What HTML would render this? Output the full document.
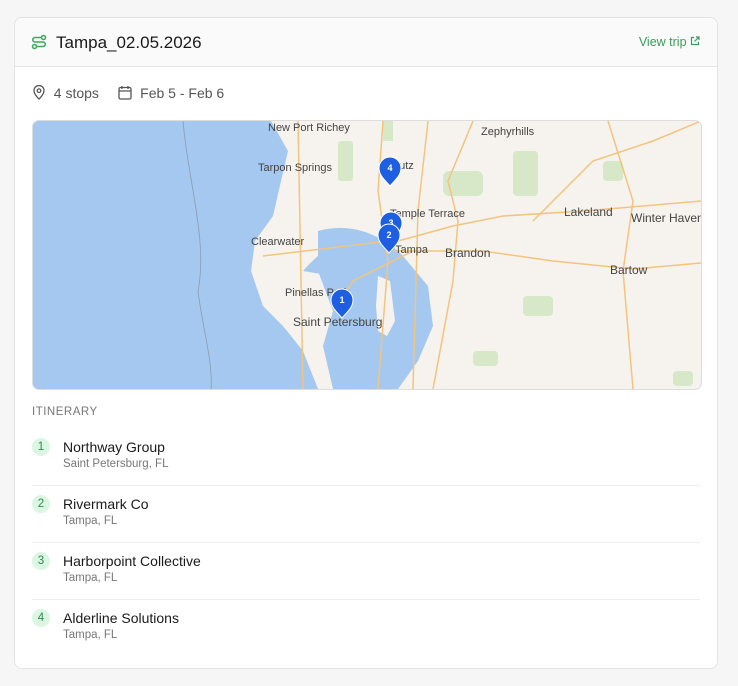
<!DOCTYPE html>
<html><head><style>
body{margin:0;background:#f6f6f6;font-family:"Liberation Sans",sans-serif;}
.card{position:absolute;left:14px;top:17px;width:702px;height:650px;background:#fff;border:1px solid #e3e3e3;border-radius:8px;overflow:hidden;}
.hdr{height:48px;background:#fafafa;border-bottom:1px solid #e6e6e6;position:relative;}
.title{position:absolute;left:41px;top:15px;font-size:17px;color:#1a1a1a;}
.vt{position:absolute;right:17px;top:17px;font-size:12.5px;color:#3f9a5a;}
.meta{position:absolute;top:67px;left:17px;font-size:14px;color:#555;}
.map{position:absolute;left:17px;top:102px;width:668px;height:268px;border:1px solid #ddd;border-radius:7px;overflow:hidden;background:#a4c8ef;}
.it{position:absolute;left:17px;top:388px;font-size:11.5px;color:#777;letter-spacing:.5px;}
.row{position:absolute;left:17px;width:668px;height:57px;border-bottom:1px solid #eee;}
.num{position:absolute;left:0;top:10px;width:18px;height:18px;border-radius:9px;background:#dcf6e4;color:#2f8a4d;font-size:11.5px;text-align:center;line-height:18px;}
.nm{position:absolute;left:31px;top:11px;font-size:14px;color:#1a1a1a;}
.loc{position:absolute;left:31px;top:30px;font-size:11.5px;color:#777;}
.mt{font-family:"Liberation Sans",sans-serif;font-size:11px;fill:#444;}
</style></head><body>
<div class="card">
 <div class="hdr">
  <svg style="position:absolute;left:16px;top:16px" width="16" height="16" viewBox="0 0 16 16" fill="none" stroke="#3fa85a" stroke-width="1.5"><circle cx="3.5" cy="12.5" r="2"/><circle cx="12.5" cy="3.5" r="2"/><path d="M10.5 3.5H4a2.2 2.2 0 0 0 0 4.5h8a2.2 2.2 0 0 1 0 4.5H5.5"/></svg>
  <div class="title">Tampa_02.05.2026</div>
  <div class="vt">View trip <svg width="10" height="10" viewBox="0 0 10 10" fill="none" stroke="#3f9a5a" stroke-width="1.2"><path d="M4 1.5H1.5v7h7V6M6 1h3v3M9 1L4.5 5.5"/></svg></div>
 </div>
 <div class="meta">
  <svg style="vertical-align:-2px" width="14" height="15" viewBox="0 0 14 15" fill="none" stroke="#555" stroke-width="1.3"><path d="M7 14s5-4.5 5-8.5a5 5 0 0 0-10 0C2 9.5 7 14 7 14z"/><circle cx="7" cy="5.7" r="1.8"/></svg>
  &nbsp;4 stops &nbsp;&nbsp;&nbsp;
  <svg style="vertical-align:-2px" width="14" height="15" viewBox="0 0 14 15" fill="none" stroke="#555" stroke-width="1.3"><rect x="1" y="2.5" width="12" height="11.5" rx="1.5"/><path d="M1 6h12M4 1v3M10 1v3"/></svg>
  &nbsp;Feb 5 - Feb 6
 </div>
 <div class="map">
  <svg width="668" height="268" viewBox="0 0 668 268">
   <path d="M238 0 L255 30 L248 60 L240 95 L222 120 L218 150 L230 185 L250 205 L270 230 L285 268 L668 268 L668 0Z" fill="#f6f3ee"/>
   <path d="M285 110 C320 100 350 115 370 135 L395 165 L400 205 L385 240 L365 268 L300 268 L290 225 L300 190 L285 150 Z" fill="#a4c8ef"/>
   <path d="M270 150 C300 115 330 110 360 120 L365 140 L330 150 L300 155Z" fill="#a4c8ef"/>
   <path d="M343 185 L345 155 L357 160 L362 200 L354 215 L345 210Z" fill="#f6f3ee"/>
   <path d="M150 0 C155 60 175 120 165 170 C170 210 180 240 178 268" stroke="#8a9bb0" stroke-width="0.8" fill="none"/>
   <g fill="#d7e8c8"><rect x="305" y="20" width="15" height="40" rx="3"/><rect x="410" y="50" width="40" height="25" rx="6"/><rect x="480" y="30" width="25" height="45" rx="4"/><rect x="570" y="40" width="20" height="20" rx="4"/><rect x="350" y="0" width="10" height="20"/><rect x="640" y="250" width="20" height="15" rx="4"/><rect x="440" y="230" width="25" height="15" rx="4"/><rect x="490" y="175" width="30" height="20" rx="4"/></g>
   <g fill="none" stroke="#f2c47e" stroke-width="1.5"><path d="M350 0 L345 70 L355 140 L345 268"/><path d="M395 0 L385 90 L380 268"/><path d="M440 0 L415 60 L425 100 L420 160 L400 268"/><path d="M365 120 L420 105 L470 95 L550 90 L610 85 L668 80"/><path d="M360 130 L450 130 L520 140 L600 148 L668 142"/><path d="M575 0 L600 80 L590 150 L600 268"/><path d="M500 100 L560 40 L620 20 L668 0"/><path d="M380 130 L320 160 L300 190"/><path d="M230 135 L355 120"/><path d="M265 0 L270 268"/></g>
   <text class="mt" x="235" y="10">New Port Richey</text>
   <text class="mt" x="448" y="14">Zephyrhills</text>
   <text class="mt" x="225" y="50">Tarpon Springs</text>
   <text class="mt" x="360" y="48">Lutz</text>
   <text class="mt" x="357" y="96">Temple Terrace</text>
   <text class="mt" style="font-size:12px" x="531" y="95">Lakeland</text>
   <text class="mt" style="font-size:12px" x="598" y="101">Winter Haven</text>
   <text class="mt" x="218" y="124">Clearwater</text>
   <text class="mt" x="362" y="132">Tampa</text>
   <text class="mt" style="font-size:12px" x="412" y="136">Brandon</text>
   <text class="mt" style="font-size:12px" x="577" y="153">Bartow</text>
   <text class="mt" x="252" y="175">Pinellas Park</text>
   <text class="mt" style="font-size:12px" x="260" y="205">Saint Petersburg</text>
   <g font-family="Liberation Sans" font-size="9" font-weight="bold" fill="#fff" text-anchor="middle">
    <g transform="translate(358,108)"><path d="M0 12 C-4 7-11 2-11-6a11 11 0 0 1 22 0C11 2 4 7 0 12Z" fill="#1d5fe0" stroke="#fff"/><text y="-3">3</text></g>
    <g transform="translate(356,120)"><path d="M0 12 C-4 7-11 2-11-6a11 11 0 0 1 22 0C11 2 4 7 0 12Z" fill="#1d5fe0" stroke="#fff"/><text y="-3">2</text></g>
    <g transform="translate(357,53)"><path d="M0 12 C-4 7-11 2-11-6a11 11 0 0 1 22 0C11 2 4 7 0 12Z" fill="#1d5fe0" stroke="#fff"/><text y="-3">4</text></g>
    <g transform="translate(309,185)"><path d="M0 12 C-4 7-11 2-11-6a11 11 0 0 1 22 0C11 2 4 7 0 12Z" fill="#1d5fe0" stroke="#fff"/><text y="-3">1</text></g>
   </g>
  </svg>
 </div>
 <div class="it">ITINERARY</div>
 <div class="row" style="top:410px"><div class="num">1</div><div class="nm">Northway Group</div><div class="loc">Saint Petersburg, FL</div></div>
 <div class="row" style="top:467px"><div class="num">2</div><div class="nm">Rivermark Co</div><div class="loc">Tampa, FL</div></div>
 <div class="row" style="top:524px"><div class="num">3</div><div class="nm">Harborpoint Collective</div><div class="loc">Tampa, FL</div></div>
 <div class="row" style="top:581px;border:0"><div class="num">4</div><div class="nm">Alderline Solutions</div><div class="loc">Tampa, FL</div></div>
</div>
</body></html>
